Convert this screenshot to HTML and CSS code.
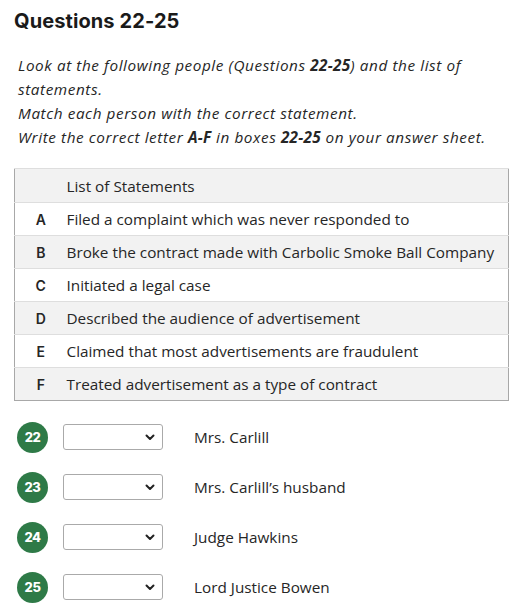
FILE: index.html
```html
<!DOCTYPE html>
<html lang="en">
<head>
<meta charset="utf-8">
<title>Questions 22-25</title>
<link rel="stylesheet" href="styles.css">
</head>
<body>
<div class="page">
  <h2 class="title">Questions 22-25</h2>
  <div class="instructions">
    <p><em>Look at the following people (Questions <b>22-25</b>) and the list of statements.</em></p>
    <p><em>Match each person with the correct statement.</em></p>
    <p><em>Write the correct letter <b>A-F</b> in boxes <b>22-25</b> on your answer sheet.</em></p>
  </div>
  <table class="statements">
    <thead>
      <tr><th class="letter"></th><th class="text">List of Statements</th></tr>
    </thead>
    <tbody>
      <tr><td class="letter">A</td><td class="text">Filed a complaint which was never responded to</td></tr>
      <tr class="alt"><td class="letter">B</td><td class="text">Broke the contract made with Carbolic Smoke Ball Company</td></tr>
      <tr><td class="letter">C</td><td class="text">Initiated a legal case</td></tr>
      <tr class="alt"><td class="letter">D</td><td class="text">Described the audience of advertisement</td></tr>
      <tr><td class="letter">E</td><td class="text">Claimed that most advertisements are fraudulent</td></tr>
      <tr class="alt"><td class="letter">F</td><td class="text">Treated advertisement as a type of contract</td></tr>
    </tbody>
  </table>
  <div class="questions">
    <div class="q">
      <span class="num">22</span>
      <span class="sel"><select><option></option><option>A</option><option>B</option><option>C</option><option>D</option><option>E</option><option>F</option></select><svg class="chev" width="10" height="7" viewBox="0 0 10 7"><path d="M1.5 1.5 L5 5 L8.5 1.5" fill="none" stroke="#222" stroke-width="2" stroke-linecap="round" stroke-linejoin="round"/></svg></span>
      <span class="name">Mrs. Carlill</span>
    </div>
    <div class="q">
      <span class="num">23</span>
      <span class="sel"><select><option></option><option>A</option><option>B</option><option>C</option><option>D</option><option>E</option><option>F</option></select><svg class="chev" width="10" height="7" viewBox="0 0 10 7"><path d="M1.5 1.5 L5 5 L8.5 1.5" fill="none" stroke="#222" stroke-width="2" stroke-linecap="round" stroke-linejoin="round"/></svg></span>
      <span class="name">Mrs. Carlill’s husband</span>
    </div>
    <div class="q">
      <span class="num">24</span>
      <span class="sel"><select><option></option><option>A</option><option>B</option><option>C</option><option>D</option><option>E</option><option>F</option></select><svg class="chev" width="10" height="7" viewBox="0 0 10 7"><path d="M1.5 1.5 L5 5 L8.5 1.5" fill="none" stroke="#222" stroke-width="2" stroke-linecap="round" stroke-linejoin="round"/></svg></span>
      <span class="name">Judge Hawkins</span>
    </div>
    <div class="q">
      <span class="num">25</span>
      <span class="sel"><select><option></option><option>A</option><option>B</option><option>C</option><option>D</option><option>E</option><option>F</option></select><svg class="chev" width="10" height="7" viewBox="0 0 10 7"><path d="M1.5 1.5 L5 5 L8.5 1.5" fill="none" stroke="#222" stroke-width="2" stroke-linecap="round" stroke-linejoin="round"/></svg></span>
      <span class="name">Lord Justice Bowen</span>
    </div>
  </div>
</div>
</body>
</html>
```
FILE: styles.css
```css
* { box-sizing: border-box; }
html, body { margin: 0; padding: 0; background: #fff; }
body {
  font-family: "Open Sans", "Noto Sans", sans-serif;
  color: #262626;
  font-size: 15.3px;
}
.page { padding: 8px 9px 0 14px; }
.title {
  font-family: Inter, "Liberation Sans", sans-serif;
  font-weight: 700;
  font-size: 20px;
  line-height: 26px;
  margin: 0;
  color: #1a1a1a;
  letter-spacing: 0.1px;
}
.instructions {
  margin: 19px 0 0 4px;
  width: 470px;
}
.instructions p {
  margin: 0;
  line-height: 24px;
  letter-spacing: 0.58px;
}
.instructions b { font-weight: 700; letter-spacing: 0.3px; }
.statements {
  margin-top: 19px;
  width: 495px;
  border-collapse: collapse;
  border: 1px solid #a8a8a8;
}
.statements th, .statements td {
  height: 33px;
  padding: 0;
  text-align: left;
  font-weight: 400;
  border-top: 1px solid #dedede;
  vertical-align: middle;
}
.statements thead th { height: 34px; }
.statements thead tr { background: #f2f2f2; }
.statements tr.alt { background: #f2f2f2; }
.statements .letter {
  width: 52px;
  text-align: center;
  font-family: Inter, "Liberation Sans", sans-serif;
  font-weight: 600;
  font-size: 14px;
}
.statements .text { padding-left: 0; }
.questions {
  margin-top: 11px;
  display: flex;
  flex-direction: column;
}
.q {
  height: 50px;
  display: flex;
  align-items: center;
  padding-left: 3px;
}
.num {
  width: 31px;
  height: 31px;
  border-radius: 50%;
  background: #2e7a47;
  color: #fff;
  font-family: Inter, "Liberation Sans", sans-serif;
  font-weight: 800;
  font-size: 13px;
  letter-spacing: -0.5px;
  display: flex;
  align-items: center;
  justify-content: center;
}
.sel {
  position: relative;
  margin-left: 15px;
  width: 100px;
  height: 26px;
  display: inline-block;
}
.sel select {
  appearance: none;
  -webkit-appearance: none;
  width: 100%;
  height: 100%;
  border: 1px solid #aaa;
  border-radius: 3px;
  background: #fff;
  font: inherit;
  margin: 0;
}
.chev {
  position: absolute;
  right: 8px;
  top: 10px;
  pointer-events: none;
}
.name {
  margin-left: 31px;
}
```
